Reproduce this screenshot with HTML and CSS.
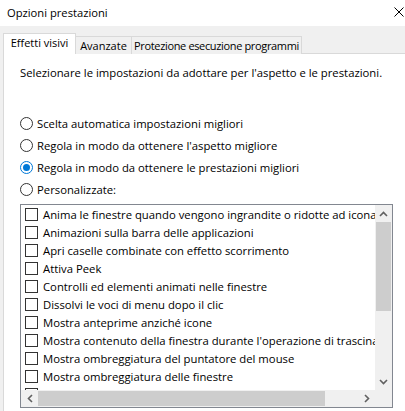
FILE: index.html
```html
<!DOCTYPE html>
<html lang="it">
<head>
<meta charset="utf-8">
<title>Opzioni prestazioni</title>
<link rel="stylesheet" href="styles.css">
</head>
<body>
<div class="window">
  <div class="titlebar">
    <span class="title">Opzioni prestazioni</span>
    <svg class="close" width="10" height="10" viewBox="0 0 10 10"><path d="M0.5 0.5 L9.5 9.5 M9.5 0.5 L0.5 9.5" stroke="#000" stroke-width="1" fill="none"/></svg>
  </div>
  <div class="content">
    <div class="tabs">
      <div class="tab tab-active tab-effetti">Effetti visivi</div>
      <div class="tab tab-avanzate">Avanzate</div>
      <div class="tab tab-protezione">Protezione esecuzione programmi</div>
    </div>
    <div class="panel">
      <p class="intro">Selezionare le impostazioni da adottare per l'aspetto e le prestazioni.</p>
      <div class="radios">
        <div class="radio"><span class="radio-circle"></span><span>Scelta automatica impostazioni migliori</span></div>
        <div class="radio"><span class="radio-circle"></span><span>Regola in modo da ottenere l'aspetto migliore</span></div>
        <div class="radio"><span class="radio-circle radio-checked"></span><span>Regola in modo da ottenere le prestazioni migliori</span></div>
        <div class="radio"><span class="radio-circle"></span><span>Personalizzate:</span></div>
      </div>
      <div class="listbox">
        <div class="list">
          <div class="row"><span class="check"></span><span class="label">Anima le finestre quando vengono ingrandite o ridotte ad icona</span></div>
          <div class="row"><span class="check"></span><span class="label">Animazioni sulla barra delle applicazioni</span></div>
          <div class="row"><span class="check"></span><span class="label">Apri caselle combinate con effetto scorrimento</span></div>
          <div class="row"><span class="check"></span><span class="label">Attiva Peek</span></div>
          <div class="row"><span class="check"></span><span class="label">Controlli ed elementi animati nelle finestre</span></div>
          <div class="row"><span class="check"></span><span class="label">Dissolvi le voci di menu dopo il clic</span></div>
          <div class="row"><span class="check"></span><span class="label">Mostra anteprime anziché icone</span></div>
          <div class="row"><span class="check"></span><span class="label">Mostra contenuto della finestra durante l'operazione di trascinamento</span></div>
          <div class="row"><span class="check"></span><span class="label">Mostra ombreggiatura del puntatore del mouse</span></div>
          <div class="row"><span class="check"></span><span class="label">Mostra ombreggiatura delle finestre</span></div>
          <div class="row"><span class="check"></span><span class="label">Mostra rettangolo di selezione traslucido</span></div>
        </div>
        <div class="vscroll">
          <div class="sb-btn"><svg width="9" height="6" viewBox="0 0 9 6"><polyline points="1,5 4.5,1.5 8,5" fill="none" stroke="#606060" stroke-width="1.6"/></svg></div>
          <div class="vtrack"><div class="vthumb"></div></div>
          <div class="sb-btn"><svg width="9" height="6" viewBox="0 0 9 6"><polyline points="1,1 4.5,4.5 8,1" fill="none" stroke="#606060" stroke-width="1.6"/></svg></div>
        </div>
        <div class="hscroll">
          <div class="sb-btn"><svg width="6" height="9" viewBox="0 0 6 9"><polyline points="5,1 1.5,4.5 5,8" fill="none" stroke="#606060" stroke-width="1.6"/></svg></div>
          <div class="htrack"><div class="hthumb"></div></div>
          <div class="sb-btn"><svg width="6" height="9" viewBox="0 0 6 9"><polyline points="1,1 4.5,4.5 1,8" fill="none" stroke="#606060" stroke-width="1.6"/></svg></div>
        </div>
        <div class="corner"></div>
      </div>
    </div>
  </div>
</div>
</body>
</html>
```
FILE: styles.css
```css
* { box-sizing: border-box; }
html, body {
  margin: 0;
  padding: 0;
}
body {
  width: 405px;
  height: 411px;
  overflow: hidden;
  background: #f0f0f0;
  font-family: "Open Sans", "Noto Sans", sans-serif;
  font-size: 11.3px;
  line-height: 15px;
  color: #000;
}
.window {
  width: 405px;
  height: 411px;
  display: flex;
  flex-direction: column;
}
.titlebar {
  height: 26px;
  flex: none;
  background: #fff;
  display: flex;
  align-items: center;
  justify-content: space-between;
  padding: 0 1px 2px 7px;
}
.title { font-size: 11.2px; }
.close { display: block; }
.content {
  flex: 1;
  display: flex;
  flex-direction: column;
  padding: 7px 0 0 3px;
  min-height: 0;
}
.tabs {
  display: flex;
  align-items: flex-end;
  height: 21px;
  margin-bottom: -1px;
  position: relative;
  z-index: 1;
  flex: none;
  font-size: 11px;
}
.tab {
  height: 18px;
  background: #f0f0f0;
  border: 1px solid #d9d9d9;
  border-left: none;
  border-bottom: none;
  text-align: center;
  padding-top: 1px;
  white-space: nowrap;
  overflow: hidden;
}
.tab-active {
  height: 21px;
  background: #fff;
  border-left: 1px solid #d9d9d9;
  padding-top: 1px;
}
.tab-effetti { width: 73px; }
.tab-avanzate { width: 56px; }
.tab-protezione {
  width: 170px;
  letter-spacing: -0.35px;
}
.panel {
  flex: 1;
  background: #fff;
  border-top: 1px solid #d9d9d9;
  border-left: 1px solid #d9d9d9;
  margin-right: -10px;
  padding: 11px 0 0 16px;
}
.intro {
  margin: 0 0 32px;
  white-space: nowrap;
}
.radios {
  display: flex;
  flex-direction: column;
}
.radio {
  height: 22px;
  display: flex;
  align-items: center;
  gap: 4px;
  white-space: nowrap;
}
.radio-circle {
  width: 13px;
  height: 13px;
  border: 1px solid #333;
  border-radius: 50%;
  background: #fff;
  flex: none;
  display: flex;
  align-items: center;
  justify-content: center;
}
.radio-checked {
  border-color: #0078d7;
}
.radio-checked::after {
  content: "";
  width: 7px;
  height: 7px;
  border-radius: 50%;
  background: #0078d7;
}
.listbox {
  margin-top: 4px;
  width: 373px;
  height: 204px;
  border: 1px solid #828790;
  display: grid;
  grid-template-columns: 354px 17px;
  grid-template-rows: 185px 17px;
  background: #fff;
}
.list {
  overflow: hidden;
  padding: 0 0 0 4px;
}
.row {
  height: 18px;
  display: flex;
  align-items: center;
  gap: 5px;
  white-space: nowrap;
}
.check {
  width: 13px;
  height: 13px;
  border: 1px solid #333;
  background: #fff;
  flex: none;
}
.vscroll {
  background: #f0f0f0;
  display: flex;
  flex-direction: column;
}
.sb-btn {
  width: 17px;
  height: 17px;
  flex: none;
  display: flex;
  align-items: center;
  justify-content: center;
}
.sb-btn svg { display: block; }
.vtrack {
  flex: 1;
  display: flex;
  flex-direction: column;
}
.vthumb {
  height: 89px;
  background: #cdcdcd;
  margin: 0 1px;
}
.hscroll {
  background: #f0f0f0;
  display: flex;
}
.htrack {
  flex: 1;
  display: flex;
}
.hthumb {
  width: 287px;
  background: #cdcdcd;
  margin: 1px 0;
}
.corner {
  background: #f0f0f0;
}
```
